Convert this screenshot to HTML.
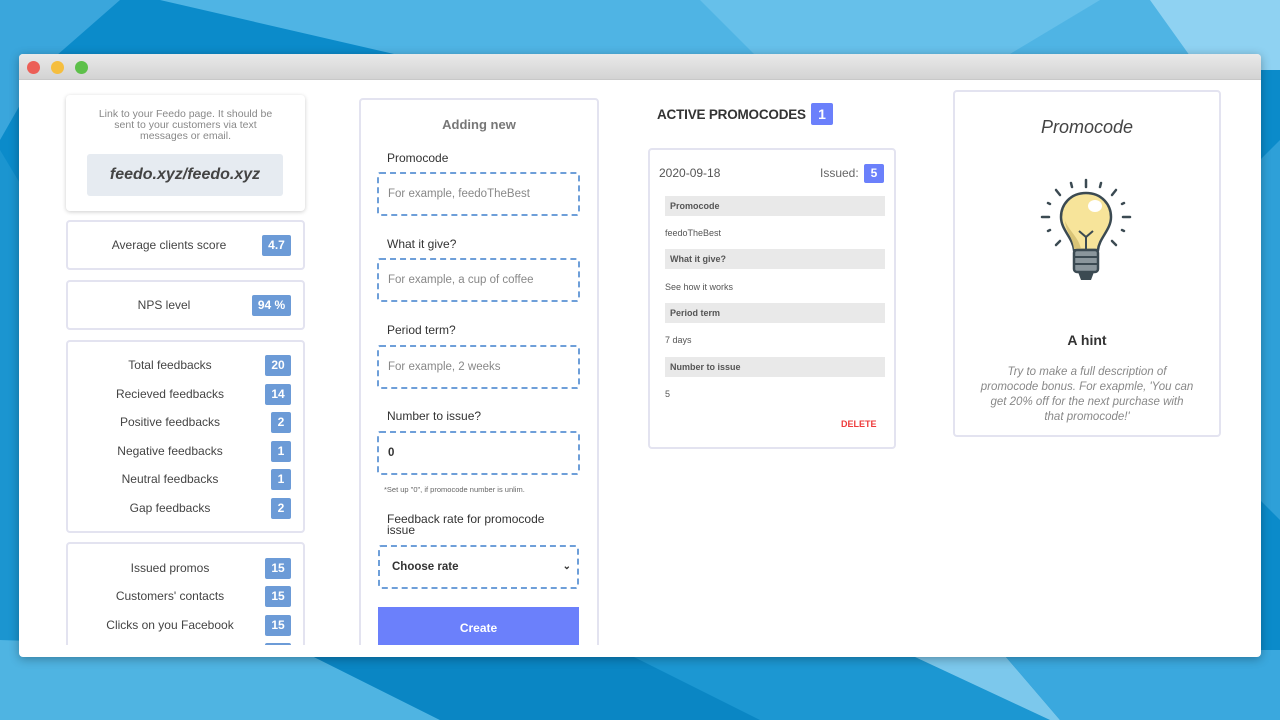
<!DOCTYPE html>
<html><head><meta charset="utf-8"><style>
*{margin:0;padding:0;box-sizing:border-box}
body{width:1280px;height:720px;overflow:hidden;position:relative;font-family:"Liberation Sans",sans-serif;background:#0a8ccc}
.a{position:absolute}
.clip{position:absolute;left:0;top:0;width:1280px;height:645px;overflow:hidden}
.card{position:absolute;background:#fff;border:2px solid #e3e3f0;border-radius:4px}
.b{position:absolute;background:#6c9bd7;color:#fff;font-weight:bold;font-size:12px;text-align:center;border-radius:2px;line-height:21px;height:21px}
.lbl{position:absolute;left:80px;width:180px;text-align:center;font-size:12px;color:#444}
.fl{position:absolute;left:387px;font-size:12px;color:#333}
.in{position:absolute;left:377px;width:203px;height:44px;border:2px dashed #6e9fd9;border-radius:3px;font-size:11.5px;color:#888;padding-left:9px;line-height:40px}
.gr{position:absolute;left:665px;width:220px;height:20px;background:#e9e9e9;font-size:9px;font-weight:bold;color:#555;padding-left:5px;line-height:20px}
.v{position:absolute;left:665px;font-size:9px;color:#555}
</style></head><body>
<svg class="a" style="left:0;top:0" width="1280" height="720">
<rect width="1280" height="720" fill="#0b8bca"/>
<polygon points="0,0 120,0 40,70 0,140" fill="#3aa6dc"/>
<polygon points="160,0 1280,0 1280,60 420,60" fill="#4fb4e4"/>
<polygon points="700,0 1100,0 1000,60 760,60" fill="#66c0ea"/>
<polygon points="1150,0 1280,0 1280,70 1200,70" fill="#8fd2f2"/>
<polygon points="0,150 30,200 30,680 0,720" fill="#1b95d0"/>
<polygon points="0,640 300,650 440,720 0,720" fill="#4fb4e2"/>
<polygon points="300,650 620,650 760,720 440,720" fill="#0a86c4"/>
<polygon points="620,650 900,650 1050,720 760,720" fill="#1c97d2"/>
<polygon points="900,650 1000,650 1060,720 1050,720" fill="#7cc8ec"/>
<polygon points="1000,650 1280,650 1280,720 1060,720" fill="#3aa8de"/>
<polygon points="1260,160 1280,140 1280,520 1260,500" fill="#2ea0d8"/>
</svg>
<div class="a" style="left:19px;top:54px;width:1242px;height:603px;background:#fff;border-radius:4px;box-shadow:0 2px 10px rgba(0,0,0,.3);overflow:hidden">
<div style="height:26px;background:linear-gradient(#e9e9e9,#d3d3d3);border-bottom:1px solid #c8c8c8"></div>
</div>
<div class="a" style="left:27px;top:61px;width:13px;height:13px;border-radius:50%;background:#ec5f57"></div>
<div class="a" style="left:51px;top:61px;width:13px;height:13px;border-radius:50%;background:#f5be3f"></div>
<div class="a" style="left:75px;top:61px;width:13px;height:13px;border-radius:50%;background:#5dc04a"></div>

<div class="clip">
<div class="card" style="left:66px;top:95px;width:239px;height:116px;border:none;box-shadow:0 1px 4px rgba(0,0,0,.2)"></div>
<div class="a" style="left:76px;top:109px;width:219px;text-align:center;font-size:10.5px;line-height:11px;color:#888">Link to your Feedo page. It should be<br>sent to your customers via text<br>messages or email.</div>
<div class="a" style="left:87px;top:154px;width:196px;height:42px;background:#e6ebf1;border-radius:3px;text-align:center;line-height:42px;font-size:16px;font-weight:bold;font-style:italic;color:#444">feedo.xyz/feedo.xyz</div>

<div class="card" style="left:66px;top:220px;width:239px;height:50px"></div>
<div class="lbl" style="left:66px;width:206px;top:238px">Average clients score</div>
<div class="b" style="left:262px;top:235px;width:29px">4.7</div>
<div class="card" style="left:66px;top:280px;width:239px;height:50px"></div>
<div class="lbl" style="left:66px;width:196px;top:298px">NPS level</div>
<div class="b" style="left:252px;top:295px;width:39px">94 %</div>

<div class="card" style="left:66px;top:340px;width:239px;height:193px"></div>
<div class="lbl" style="top:358px">Total feedbacks</div><div class="b" style="left:265px;top:355px;width:26px">20</div>
<div class="lbl" style="top:387px">Recieved feedbacks</div><div class="b" style="left:265px;top:384px;width:26px">14</div>
<div class="lbl" style="top:415px">Positive feedbacks</div><div class="b" style="left:271px;top:412px;width:20px">2</div>
<div class="lbl" style="top:444px">Negative feedbacks</div><div class="b" style="left:271px;top:441px;width:20px">1</div>
<div class="lbl" style="top:472px">Neutral feedbacks</div><div class="b" style="left:271px;top:469px;width:20px">1</div>
<div class="lbl" style="top:501px">Gap feedbacks</div><div class="b" style="left:271px;top:498px;width:20px">2</div>

<div class="card" style="left:66px;top:542px;width:239px;height:130px"></div>
<div class="lbl" style="top:561px">Issued promos</div><div class="b" style="left:265px;top:558px;width:26px">15</div>
<div class="lbl" style="top:589px">Customers' contacts</div><div class="b" style="left:265px;top:586px;width:26px">15</div>
<div class="lbl" style="top:618px">Clicks on you Facebook</div><div class="b" style="left:265px;top:615px;width:26px">15</div>
<div class="b" style="left:265px;top:643px;width:26px"></div>

<div class="card" style="left:359px;top:98px;width:240px;height:580px"></div>
<div class="a" style="left:359px;width:240px;top:117px;text-align:center;font-size:13px;font-weight:bold;color:#777">Adding new</div>
<div class="fl" style="top:151px">Promocode</div>
<div class="in" style="top:172px">For example, feedoTheBest</div>
<div class="fl" style="top:237px">What it give?</div>
<div class="in" style="top:258px">For example, a cup of coffee</div>
<div class="fl" style="top:323px">Period term?</div>
<div class="in" style="top:345px">For example, 2 weeks</div>
<div class="fl" style="top:409px">Number to issue?</div>
<div class="in" style="top:431px;color:#333;font-weight:bold">0</div>
<div class="a" style="left:384px;top:485px;font-size:7.5px;color:#666">*Set up "0", if promocode number is unlim.</div>
<div class="fl" style="top:514px;line-height:11px">Feedback rate for promocode<br>issue</div>
<div class="in" style="top:545px;left:378px;width:201px;color:#333;font-weight:bold;padding-left:12px">Choose rate<span style="position:absolute;right:6px;top:0;font-size:10px">&#8964;</span></div>
<div class="a" style="left:378px;top:607px;width:201px;height:38px;background:#6b80fb;color:#fff;font-weight:bold;font-size:12px;text-align:center;line-height:42px">Create</div>

<div class="a" style="left:657px;top:107px;font-size:13.5px;font-weight:bold;color:#333;letter-spacing:-0.2px">ACTIVE PROMOCODES</div>
<div class="a" style="left:811px;top:103px;width:22px;height:22px;background:#6b80fb;color:#fff;font-weight:bold;font-size:14px;text-align:center;line-height:22px;border-radius:2px">1</div>
<div class="card" style="left:648px;top:148px;width:248px;height:301px"></div>
<div class="a" style="left:659px;top:166px;font-size:12px;color:#555">2020-09-18</div>
<div class="a" style="left:820px;top:166px;font-size:12px;color:#666">Issued:</div>
<div class="a" style="left:864px;top:164px;width:20px;height:19px;background:#6b80fb;color:#fff;font-weight:bold;font-size:12px;text-align:center;line-height:19px;border-radius:2px">5</div>
<div class="gr" style="top:196px">Promocode</div><div class="v" style="top:228px">feedoTheBest</div>
<div class="gr" style="top:249px">What it give?</div><div class="v" style="top:282px">See how it works</div>
<div class="gr" style="top:303px">Period term</div><div class="v" style="top:335px">7 days</div>
<div class="gr" style="top:357px">Number to issue</div><div class="v" style="top:389px">5</div>
<div class="a" style="left:841px;top:419px;font-size:9px;font-weight:bold;color:#ee3b3b">DELETE</div>

<div class="card" style="left:953px;top:90px;width:268px;height:347px"></div>
<div class="a" style="left:953px;width:268px;top:117px;text-align:center;font-size:18px;font-style:italic;color:#444">Promocode</div>
<svg class="a" style="left:1040px;top:176px" width="92" height="110" viewBox="0 0 92 110">
<g stroke="#3b4a52" stroke-width="2.5" stroke-linecap="round" fill="none">
<line x1="46" y1="4" x2="46" y2="11"/><line x1="31" y1="7" x2="32" y2="11"/><line x1="61" y1="7" x2="60" y2="11"/>
<line x1="16" y1="14" x2="20" y2="19"/><line x1="76" y1="14" x2="72" y2="19"/>
<line x1="8" y1="27" x2="10" y2="28"/><line x1="84" y1="27" x2="82" y2="28"/>
<line x1="2" y1="41" x2="9" y2="41"/><line x1="83" y1="41" x2="90" y2="41"/>
<line x1="8" y1="55" x2="10" y2="54"/><line x1="84" y1="55" x2="82" y2="54"/>
<line x1="16" y1="69" x2="20" y2="65"/><line x1="76" y1="69" x2="72" y2="65"/>
</g>
<path d="M46 17 C30 17 21 29 21 41 C21 54 33 62 34 74 L58 74 C59 62 71 54 71 41 C71 29 62 17 46 17Z" fill="#f7e49a" stroke="#3b4a52" stroke-width="2.5"/>
<path d="M25 45 C26 56 33 62 34 73 L41 73 C39 62 30 56 25 45Z" fill="#d9c477"/>
<ellipse cx="55" cy="30" rx="7" ry="6" fill="#fff"/>
<path d="M39 55 L46 61 L53 55 M46 61 L46 74" stroke="#3b4a52" stroke-width="2" fill="none"/>
<rect x="34" y="74" width="24" height="22" rx="3" fill="#8a969c" stroke="#3b4a52" stroke-width="2.5"/>
<line x1="34" y1="81" x2="58" y2="81" stroke="#3b4a52" stroke-width="2"/><line x1="34" y1="88" x2="58" y2="88" stroke="#3b4a52" stroke-width="2"/>
<path d="M38 96 L41 104 L51 104 L54 96Z" fill="#3b4a52"/>
</svg>
<div class="a" style="left:953px;width:268px;top:332px;text-align:center;font-size:14px;font-weight:bold;color:#333">A hint</div>
<div class="a" style="left:953px;width:268px;top:365px;text-align:center;font-size:11.5px;line-height:15px;font-style:italic;color:#888">Try to make a full description of<br>promocode bonus. For exapmle, 'You can<br>get 20% off for the next purchase with<br>that promocode!'</div>
</div>
</body></html>
